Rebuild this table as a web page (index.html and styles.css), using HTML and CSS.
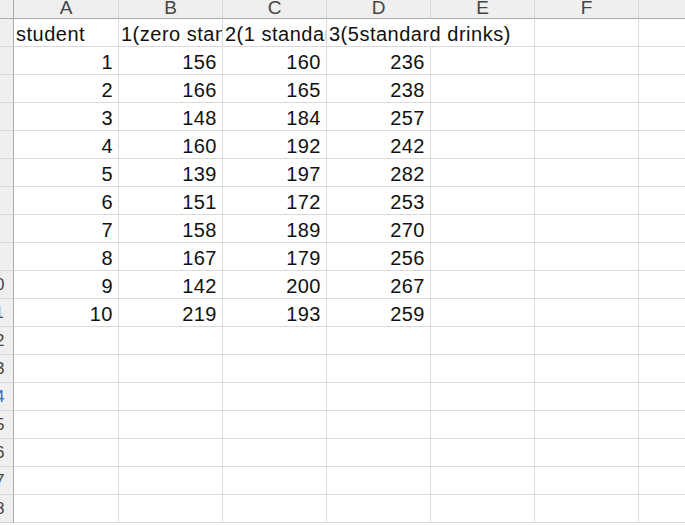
FILE: index.html
```html
<!DOCTYPE html>
<html>
<head>
<meta charset="utf-8">
<link rel="stylesheet" href="styles.css">
</head>
<body>
<div class="sheet">
  <div class="corner"></div>
  <div class="ch">A</div><div class="ch">B</div><div class="ch">C</div><div class="ch">D</div><div class="ch">E</div><div class="ch">F</div><div class="ch">G</div>

  <div class="rh"><span>1</span></div>
  <div class="c">student</div><div class="c">1(zero standard drinks)</div><div class="c">2(1 standard drinks)</div><div class="c spill">3(5standard drinks)</div><div class="c"></div><div class="c"></div><div class="c"></div>

  <div class="rh"><span>2</span></div>
  <div class="c n">1</div><div class="c n">156</div><div class="c n">160</div><div class="c n">236</div><div class="c"></div><div class="c"></div><div class="c"></div>

  <div class="rh"><span>3</span></div>
  <div class="c n">2</div><div class="c n">166</div><div class="c n">165</div><div class="c n">238</div><div class="c"></div><div class="c"></div><div class="c"></div>

  <div class="rh"><span>4</span></div>
  <div class="c n">3</div><div class="c n">148</div><div class="c n">184</div><div class="c n">257</div><div class="c"></div><div class="c"></div><div class="c"></div>

  <div class="rh"><span>5</span></div>
  <div class="c n">4</div><div class="c n">160</div><div class="c n">192</div><div class="c n">242</div><div class="c"></div><div class="c"></div><div class="c"></div>

  <div class="rh"><span>6</span></div>
  <div class="c n">5</div><div class="c n">139</div><div class="c n">197</div><div class="c n">282</div><div class="c"></div><div class="c"></div><div class="c"></div>

  <div class="rh"><span>7</span></div>
  <div class="c n">6</div><div class="c n">151</div><div class="c n">172</div><div class="c n">253</div><div class="c"></div><div class="c"></div><div class="c"></div>

  <div class="rh"><span>8</span></div>
  <div class="c n">7</div><div class="c n">158</div><div class="c n">189</div><div class="c n">270</div><div class="c"></div><div class="c"></div><div class="c"></div>

  <div class="rh"><span>9</span></div>
  <div class="c n">8</div><div class="c n">167</div><div class="c n">179</div><div class="c n">256</div><div class="c"></div><div class="c"></div><div class="c"></div>

  <div class="rh"><span>10</span></div>
  <div class="c n">9</div><div class="c n">142</div><div class="c n">200</div><div class="c n">267</div><div class="c"></div><div class="c"></div><div class="c"></div>

  <div class="rh"><span>11</span></div>
  <div class="c n">10</div><div class="c n">219</div><div class="c n">193</div><div class="c n">259</div><div class="c"></div><div class="c"></div><div class="c"></div>

  <div class="rh"><span>12</span></div>
  <div class="c"></div><div class="c"></div><div class="c"></div><div class="c"></div><div class="c"></div><div class="c"></div><div class="c"></div>

  <div class="rh"><span>13</span></div>
  <div class="c"></div><div class="c"></div><div class="c"></div><div class="c"></div><div class="c"></div><div class="c"></div><div class="c"></div>

  <div class="rh active"><span>14</span></div>
  <div class="c"></div><div class="c"></div><div class="c"></div><div class="c"></div><div class="c"></div><div class="c"></div><div class="c"></div>

  <div class="rh"><span>15</span></div>
  <div class="c"></div><div class="c"></div><div class="c"></div><div class="c"></div><div class="c"></div><div class="c"></div><div class="c"></div>

  <div class="rh"><span>16</span></div>
  <div class="c"></div><div class="c"></div><div class="c"></div><div class="c"></div><div class="c"></div><div class="c"></div><div class="c"></div>

  <div class="rh"><span>17</span></div>
  <div class="c"></div><div class="c"></div><div class="c"></div><div class="c"></div><div class="c"></div><div class="c"></div><div class="c"></div>

  <div class="rh"><span>18</span></div>
  <div class="c"></div><div class="c"></div><div class="c"></div><div class="c"></div><div class="c"></div><div class="c"></div><div class="c"></div>
</div>
</body>
</html>
```
FILE: styles.css
```css
html, body {
  margin: 0;
  padding: 0;
  background: #ffffff;
  overflow: hidden;
}

.sheet {
  display: grid;
  grid-template-columns: 14px 105px 104px 104px 104px 104px 104px 120px;
  grid-template-rows: 19px repeat(18, 28px);
  font-family: "Liberation Sans", Arial, sans-serif;
  width: 759px;
}

.corner {
  background: #efefef;
  border-right: 1px solid #ababab;
  border-bottom: 1px solid #ababab;
  box-sizing: border-box;
}

.ch {
  background: #efefef;
  border-right: 1px solid #d6d6d6;
  border-bottom: 1px solid #ababab;
  box-sizing: border-box;
  color: #444444;
  font-size: 19px;
  line-height: 15px;
  text-align: center;
  overflow: hidden;
}

.rh {
  background: #efefef;
  border-right: 1px solid #ababab;
  border-bottom: 1px solid #d6d6d6;
  box-sizing: border-box;
  display: flex;
  justify-content: flex-end;
  align-items: center;
  overflow: hidden;
  color: #444444;
  font-size: 17px;
}

.rh span {
  flex: 0 0 36px;
  text-align: center;
}

.rh.active {
  color: #2f6fc8;
}

.c {
  border-right: 1px solid #dadada;
  border-bottom: 1px solid #dadada;
  box-sizing: border-box;
  font-size: 20px;
  letter-spacing: 0.5px;
  line-height: 26px;
  padding: 1px 6px 0 2px;
  padding-top: 2px;
  color: #111111;
  white-space: nowrap;
  overflow: hidden;
}

.c.n {
  text-align: right;
  padding-right: 5px;
}

.c.spill {
  overflow: visible;
  border-right-color: transparent;
}
```
